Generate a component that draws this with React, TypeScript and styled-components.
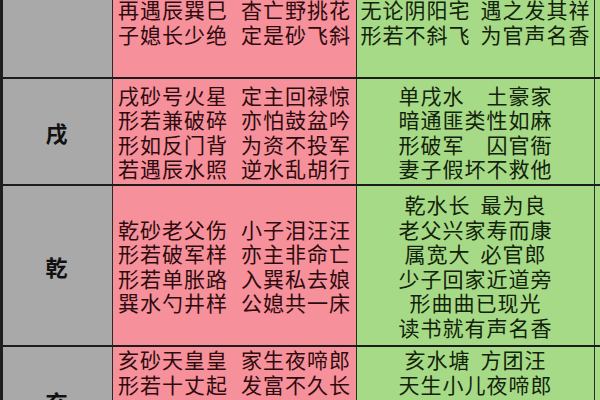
import styled, { createGlobalStyle } from 'styled-components';

const GlobalStyle = createGlobalStyle`
  html, body {
    margin: 0;
    padding: 0;
    background: #a9a9a9;
  }
  body {
    font-family: "Noto Sans CJK SC", "Noto Sans", sans-serif;
  }
`;

type Align = 'start' | 'center' | 'end';

interface RowData {
  label: string;
  height: number;
  align: Align;
  pink: string[][];
  green: string[][];
}

const rows: RowData[] = [
  {
    label: '',
    height: 79,
    align: 'end',
    pink: [
      ['再遇辰巽巳', '杳亡野挑花'],
      ['子媳长少绝', '定是砂飞斜'],
    ],
    green: [
      ['无论阴阳宅', '遇之发其祥'],
      ['形若不斜飞', '为官声名香'],
    ],
  },
  {
    label: '戌',
    height: 107,
    align: 'center',
    pink: [
      ['戌砂号火星', '定主回禄惊'],
      ['形若兼破碎', '亦怕鼓盆吟'],
      ['形如反门背', '为资不投军'],
      ['若遇辰水照', '逆水乱胡行'],
    ],
    green: [
      ['单戌水　土豪家'],
      ['暗通匪类性如麻'],
      ['形破军　囚官衙'],
      ['妻子假坏不救他'],
    ],
  },
  {
    label: '乾',
    height: 161,
    align: 'center',
    pink: [
      ['乾砂老父伤', '小子泪汪汪'],
      ['形若破军样', '亦主非命亡'],
      ['形若单胀路', '入巽私去娘'],
      ['巽水勺井样', '公媳共一床'],
    ],
    green: [
      ['乾水长', '最为良'],
      ['老父兴家寿而康'],
      ['属宽大', '必官郎'],
      ['少子回家近道旁'],
      ['形曲曲已现光'],
      ['读书就有声名香'],
    ],
  },
  {
    label: '亥',
    height: 110,
    align: 'start',
    pink: [
      ['亥砂天皇皇', '家生夜啼郎'],
      ['形若十丈起', '发富不久长'],
    ],
    green: [
      ['亥水塘', '方团汪'],
      ['天生小儿夜啼郎'],
    ],
  },
];

const Viewport = styled.div`
  width: 600px;
  height: 400px;
  overflow: hidden;
  background: #a9a9a9;
`;

const Table = styled.div`
  border-left: 3px solid #1e1e1e;
  display: flex;
  flex-direction: column;
`;

const Row = styled.div<{ $h: number }>`
  display: grid;
  grid-template-columns: 110px 244px 238px 1fr;
  height: ${(p) => p.$h}px;
  border-bottom: 2px solid #1c1c1c;
  box-sizing: border-box;
`;

const LabelCell = styled.div`
  background: #a9a9a9;
  border-right: 1px solid #2a2a2a;
  display: flex;
  align-items: center;
  justify-content: center;
  font-size: 22px;
  font-weight: 700;
  color: #111;
  padding-right: 2px;
`;

const alignMap: Record<Align, string> = {
  start: 'flex-start',
  center: 'center',
  end: 'flex-end',
};

const TextCell = styled.div<{ $tone: 'pink' | 'green'; $align: Align }>`
  background: ${(p) => (p.$tone === 'pink' ? '#f6909b' : '#a7da87')};
  color: ${(p) => (p.$tone === 'pink' ? '#2e0b0e' : '#13230b')};
  border-right: 1px solid #2a2a2a;
  display: flex;
  flex-direction: column;
  justify-content: ${(p) => alignMap[p.$align]};
  align-items: ${(p) => (p.$tone === 'pink' ? 'flex-start' : 'center')};
  padding-bottom: ${(p) => (p.$align === 'end' ? '31px' : '0')};
  padding-left: ${(p) => (p.$tone === 'pink' ? '5px' : '0')};
  box-sizing: border-box;
  overflow: hidden;
`;

const Filler = styled.div`
  background: #a7da87;
`;

const Line = styled.div<{ $gap: number }>`
  display: flex;
  gap: ${(p) => p.$gap}px;
  font-size: 21px;
  letter-spacing: 1px;
  line-height: 24.5px;
  white-space: nowrap;
`;

export default function App() {
  return (
    <Viewport>
      <GlobalStyle />
      <Table>
        {rows.map((row, i) => (
          <Row $h={row.height} key={i}>
            <LabelCell>{row.label}</LabelCell>
            <TextCell $tone="pink" $align={row.align}>
              {row.pink.map((line, j) => (
                <Line $gap={13} key={j}>
                  {line.map((p, k) => (
                    <span key={k}>{p}</span>
                  ))}
                </Line>
              ))}
            </TextCell>
            <TextCell $tone="green" $align={row.align}>
              {row.green.map((line, j) => (
                <Line $gap={10} key={j}>
                  {line.map((p, k) => (
                    <span key={k}>{p}</span>
                  ))}
                </Line>
              ))}
            </TextCell>
            <Filler />
          </Row>
        ))}
      </Table>
    </Viewport>
  );
}
